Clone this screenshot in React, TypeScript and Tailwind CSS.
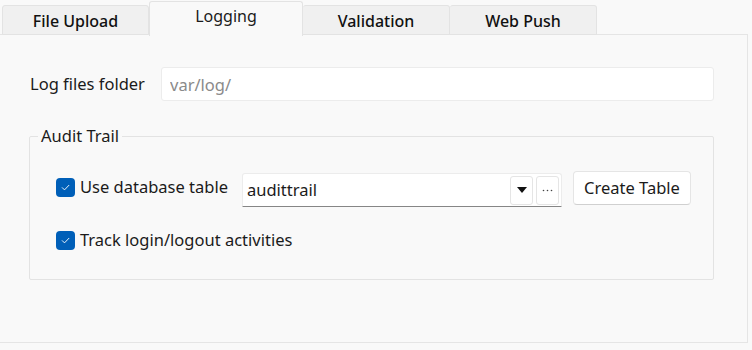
import { useState } from 'react';

const TABS = ['File Upload', 'Logging', 'Validation', 'Web Push'];

function Checkbox({ checked, onChange }: { checked: boolean; onChange: () => void }) {
  return (
    <button
      type="button"
      onClick={onChange}
      className={`w-[19px] h-[19px] rounded-[4px] flex items-center justify-center shrink-0 ${
        checked ? 'bg-[#005fb8]' : 'bg-white border border-[#8a8a8a]'
      }`}
    >
      {checked && (
        <svg width="11" height="11" viewBox="0 0 12 12" fill="none">
          <path d="M2.5 6.2l2.4 2.4 4.8-5" stroke="white" strokeWidth="1" strokeLinecap="round" strokeLinejoin="round" />
        </svg>
      )}
    </button>
  );
}

export default function App() {
  const [active, setActive] = useState('Logging');
  const [useTable, setUseTable] = useState(true);
  const [track, setTrack] = useState(true);

  return (
    <div className="w-[752px] h-[350px] bg-[#f9f9f9] overflow-hidden text-[#1b1b1b] font-['Noto_Sans',sans-serif] text-[16.5px]">
      {/* Tabs */}
      <div className="flex items-end h-[35px] pl-[2px] relative z-10">
        {TABS.map((tab) =>
          tab === active ? (
            <button
              key={tab}
              onClick={() => setActive(tab)}
              className="w-[154px] h-[35px] -mb-px bg-[#f9f9f9] border border-b-0 border-[#e3e3e3] rounded-t-[3px] pb-[6px] text-[16px]"
            >
              {tab}
            </button>
          ) : (
            <button
              key={tab}
              onClick={() => setActive(tab)}
              className="w-[147px] h-[30px] bg-[#f0f0f0] border border-[#e3e3e3] border-l-0 first:border-l rounded-t-[3px] pt-[2px] text-[16px] font-medium text-[#111]"
            >
              {tab}
            </button>
          )
        )}
      </div>

      {/* Panel */}
      <div className="w-[748px] h-[309px] -mt-px border border-l-0 border-[#e5e5e5] bg-[#f9f9f9] pt-[32px] pl-[29px]">
        <div className="flex items-center h-[34px]">
          <span className="w-[132px] pl-px">Log files folder</span>
          <input
            className="w-[553px] h-[34px] bg-white border border-[#ececec] rounded-[3px] px-[8px] outline-none placeholder:text-[#8a8a8a]"
            placeholder="var/log/"
          />
        </div>

        <fieldset className="mt-[25px] w-[685px] h-[154px] border border-[#e3e3e3] rounded-[2px] pl-[8px] pr-0 pt-[25px]">
          <legend className="px-[3px] leading-[20px]">Audit Trail</legend>
          <div className="pl-[18px]">
            <div className="flex items-start h-[34px]">
              <div className="mt-[7px] flex items-center gap-[5px] h-[19px] w-[186px]">
                <Checkbox checked={useTable} onChange={() => setUseTable(!useTable)} />
                <span>Use database table</span>
              </div>
              <div className="mt-[2px] flex items-center w-[320px] h-[34px] bg-white border border-[#ececec] border-b-[#868686] rounded-t-[3px] pl-[4px] pr-[2px]">
                <span className="flex-1">audittrail</span>
                <button className="w-[23px] h-[29px] bg-white border border-[#e5e5e5] rounded-[3px] flex items-center justify-center">
                  <svg width="10" height="6" viewBox="0 0 10 6">
                    <path d="M0 0h10L5 6z" fill="#111" />
                  </svg>
                </button>
                <button className="ml-[3px] w-[23px] h-[29px] bg-white border border-[#e5e5e5] rounded-[3px] flex items-center justify-center">
                  <svg width="11" height="3" viewBox="0 0 11 3">
                    <circle cx="1.5" cy="1.5" r="0.8" fill="#444" />
                    <circle cx="5.5" cy="1.5" r="0.8" fill="#444" />
                    <circle cx="9.5" cy="1.5" r="0.8" fill="#444" />
                  </svg>
                </button>
              </div>
              <button className="ml-[11px] w-[118px] h-[34px] bg-white border border-[#e5e5e5] border-b-[#d0d0d0] rounded-[4px]">
                Create Table
              </button>
            </div>
            <div className="flex items-center gap-[5px] h-[19px] mt-[26px]">
              <Checkbox checked={track} onChange={() => setTrack(!track)} />
              <span>Track login/logout activities</span>
            </div>
          </div>
        </fieldset>
      </div>
    </div>
  );
}
